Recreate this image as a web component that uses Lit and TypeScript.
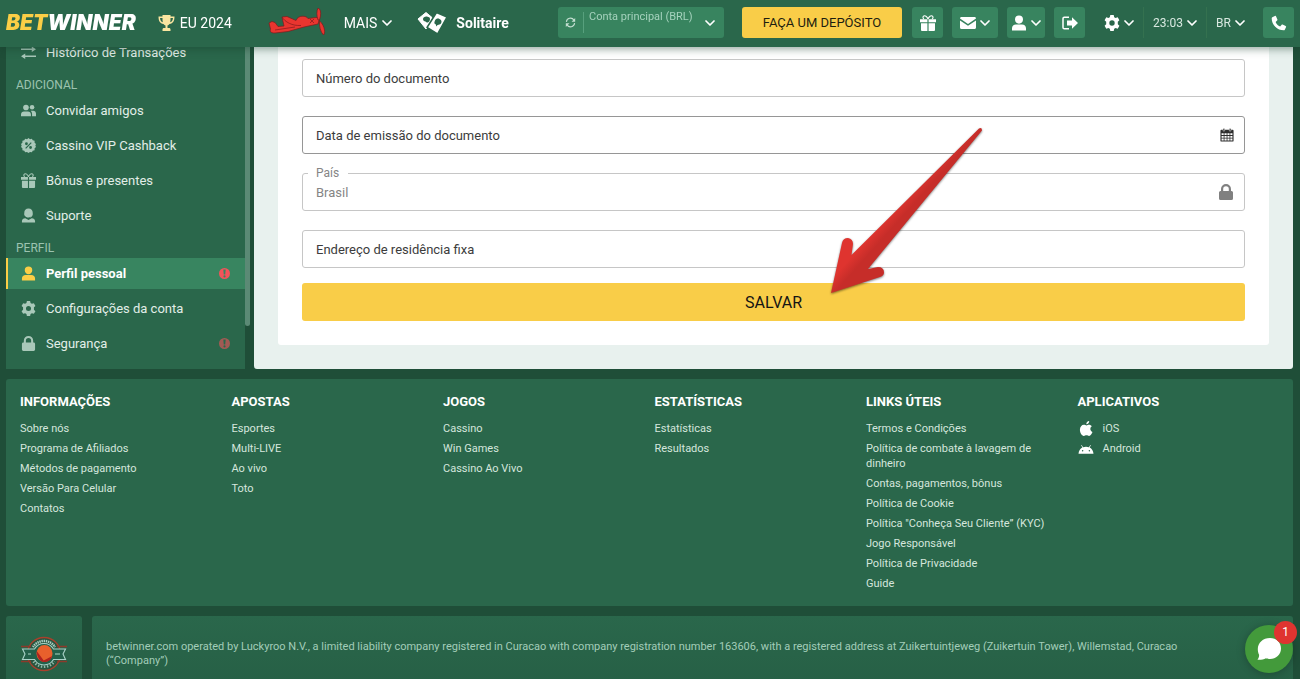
import { LitElement, html, css, svg, nothing, TemplateResult } from "lit";
import { customElement } from "lit/decorators.js";
import { classMap } from "lit/directives/class-map.js";

const chevron = html`<svg class="chev" viewBox="0 0 10 6" aria-hidden="true"><path d="M1 1l4 4 4-4" fill="none" stroke="currentColor" stroke-width="1.7" stroke-linecap="round" stroke-linejoin="round"/></svg>`;

const userShape = svg`<path d="M8 0.5a4 4 0 0 1 4 4c0 2.300-1.700 4.200-4 4.200s-4-1.900-4-4.200a4 4 0 0 1 4-4zM1 15.500v-2.200c0-2.300 1.700-3.800 4-3.800h6c2.300 0 4 1.500 4 3.800v2.200z"/>`;
const giftShape = svg`<path d="M0 4.200h7.400v3H0zM8.600 4.200H16v3H8.600zM1 8.200h6.400V16H2a1 1 0 0 1-1-1zM8.600 8.200H15V15a1 1 0 0 1-1 1H8.600z"/><path d="M8 4C7 1 5 .4 3.800 1S2.800 3.400 4 4M8 4c1-3 3-3.600 4.200-3S13.200 3.400 12 4" fill="none" stroke="currentColor" stroke-width="1.100"/>`;
const gearShape = svg`<path fill-rule="evenodd" d="M6.300 0h3.400l.5 2.200 1.400.8 2.100-.7 1.700 2.900-1.600 1.500v2.600l1.600 1.500-1.700 2.900-2.100-.7-1.400.8-.5 2.200H6.300l-.5-2.200-1.400-.8-2.100.7L.6 10.800l1.600-1.500V6.700L.6 5.200l1.700-2.900 2.100.7 1.400-.8zM8 5.300a2.700 2.700 0 1 0 0 5.400 2.700 2.700 0 0 0 0-5.400z"/>`;
const lockShape = svg`<path fill-rule="evenodd" d="M3 7V5a5 5 0 0 1 10 0v2h.5A1.500 1.500 0 0 1 15 8.500v6a1.500 1.500 0 0 1-1.500 1.500h-11A1.500 1.500 0 0 1 1 14.500v-6A1.500 1.500 0 0 1 2.500 7zm2.200 0h5.600V5a2.800 2.800 0 0 0-5.600 0z"/>`;

const shapes: Record<string, TemplateResult> = {
  user: userShape,
  gift: giftShape,
  gear: gearShape,
  lock: lockShape,
  transfer: svg`<path d="M0 4.500h12M4 12h12" fill="none" stroke="currentColor" stroke-width="1.700"/><path d="M11.500 1.500L16 4.500l-4.500 3zM4.500 9L0 12l4.500 3z"/>`,
  friends: svg`<circle cx="5.300" cy="4.800" r="3"/><path d="M0 14v-1.800c0-2 1.400-3.200 3.200-3.200h4.200c1.800 0 3.200 1.200 3.200 3.200V14z"/><circle cx="11.800" cy="4.600" r="2.400"/><path d="M10.300 8.300h2.600c1.800 0 3.100 1.200 3.100 3V14h-4.200v-2c0-1.600-.5-2.700-1.500-3.700z"/>`,
  percent: svg`<path fill-rule="evenodd" d="M8 0l1.600 1.200 2-.5.9 1.800 2 .5v2L16 6.500 15.300 8l.7 1.600-1.500 1.400v2l-2 .5-.9 1.800-2-.4L8 16l-1.600-1.100-2 .4-.9-1.800-2-.5v-2L0 9.600.7 8 0 6.500 1.500 5V3l2-.5.900-1.800 2 .5zM5.800 4.600a1.500 1.500 0 1 0 0 3 1.500 1.500 0 0 0 0-3zm4.400 4a1.500 1.500 0 1 0 0 3 1.500 1.500 0 0 0 0-3zM10.500 4.500l-6 6.200.9.800 6-6.200z"/>`,
  support: svg`<path d="M8 .5c2.900 0 4.500 2 4.500 4.600 0 1.300.3 2-.3 2.900-.8 1.700-2.300 2.700-4.200 2.700S4.600 9.700 3.800 8c-.6-.9-.3-1.600-.3-2.900C3.500 2.500 5.100.5 8 .5z"/><path d="M1 15.500V14c0-2 1.500-3 3.600-3.200L8 12.700l3.400-1.900C13.500 11 15 12 15 14v1.500z"/><path d="M4 9c1.500 2 4.500 2.200 6 .8" fill="none" stroke="#2a674b" stroke-width=".9"/>`,
  mail: svg`<path d="M0 3.500C0 2.700.6 2 1.500 2h13c.9 0 1.500.7 1.500 1.500L8 9zM0 5.500l8 5.300 8-5.300v7c0 .8-.6 1.500-1.500 1.500h-13A1.500 1.500 0 0 1 0 12.500z"/>`,
  exit: svg`<path d="M7 2.200H2.300c-.8 0-1.300.5-1.300 1.300v9c0 .8.500 1.300 1.300 1.300H7" fill="none" stroke="currentColor" stroke-width="1.500"/><path d="M5 5.500h5V2.300L16 8l-6 5.700v-3.200H5z"/>`,
  phone: svg`<path d="M1.300 2.200L3.900.9c.5-.2 1 0 1.200.5l1.300 3c.2.400.1.800-.3 1.100L4.600 6.900c.9 2 2.400 3.500 4.500 4.500l1.400-1.500c.3-.4.7-.5 1.100-.3l3 1.300c.5.2.7.700.5 1.200l-1.300 2.600c-.2.300-.5.600-1 .6C6.200 15.300.7 9.800.7 3.200c0-.5.200-.8.600-1z"/>`,
  refresh: svg`<path d="M2 7a6 6 0 0 1 11-2.500M14 9a6 6 0 0 1-11 2.500" fill="none" stroke="currentColor" stroke-width="1.600"/><path d="M14.800 1.500V7H9.500zM1.200 14.500V9h5.300z"/>`,
  calendar: svg`<path fill-rule="evenodd" d="M1.500 2h13c.6 0 1 .4 1 1v11.500c0 .6-.4 1-1 1h-13c-.6 0-1-.4-1-1V3c0-.6.4-1 1-1zM1.800 6v2h2.400V6zm3.300 0v2h2.500V6zm3.400 0v2h2.400V6zm3.300 0v2h2.400V6zm-10 3v2h2.400V9zm3.300 0v2h2.500V9zm3.400 0v2h2.400V9zm3.300 0v2h2.400V9zm-10 3v2.300h2.400V12zm3.300 0v2.300h2.500V12zm3.400 0v2.300h2.400V12zm3.300 0v2.300h2.400V12z"/><path d="M3.500.5h1.800v3H3.500zM10.700.5h1.800v3h-1.800z" stroke="#fff" stroke-width=".5"/>`,
  apple: svg`<path d="M11.200 4c1.200 0 2.400.7 3.100 1.700-2.500 1.500-2.100 5 .6 6-.6 1.500-2 4.200-3.600 4.200-1.100 0-1.500-.6-2.800-.6s-1.700.6-2.800.6C3.600 16 1.500 12.600 1.500 9.400 1.500 6.200 3.500 4 5.700 4c1.200 0 2.100.7 2.900.7S10 4 11.200 4zM8.300 3.500C8.200 1.800 9.700.2 11.400 0c.2 1.900-1.300 3.500-3.100 3.500z"/>`,
  android: svg`<path fill-rule="evenodd" d="M0 13.500c.2-2.800 1.800-5.200 4.100-6.500L2.800 4.600l.6-.3L4.800 6.700a8.600 8.600 0 0 1 6.400 0l1.400-2.400.6.300L11.900 7c2.300 1.300 3.900 3.700 4.100 6.500zM4.400 9.600a.8.800 0 1 0 0 1.600.8.800 0 0 0 0-1.600zm7.200 0a.8.800 0 1 0 0 1.600.8.800 0 0 0 0-1.600z"/>`,
  alert: svg`<path fill-rule="evenodd" d="M8 0a8 8 0 1 1 0 16A8 8 0 0 1 8 0zM6.300 2.200l.6 7.400h2.200l.6-7.400zM8 10.600a1.600 1.600 0 1 0 0 3.200 1.600 1.600 0 0 0 0-3.200z"/>`,
  trophy: svg`<path fill-rule="evenodd" d="M4 0h8v1.500h4C16 6 14.500 8.300 11 9c-.6.900-1.300 1.400-2 1.600V13h1.500c1 0 1.500.6 1.500 1.500V16H4v-1.500C4 13.600 4.500 13 5.500 13H7v-2.400C6.300 10.400 5.600 9.900 5 9 1.500 8.300 0 6 0 1.500h4zM1.500 3c.2 2.300 1 3.700 2.800 4.300C4 6 4 4.500 4 3zm13 0H12c0 1.500 0 3-.3 4.300C13.500 6.700 14.300 5.300 14.500 3z"/>`,
};

const icon = (name: string, cls = "ic") =>
  html`<svg class=${cls} viewBox="0 0 16 16" fill="currentColor" aria-hidden="true">${shapes[name]}</svg>`;

@customElement("bw-header")
class BwHeader extends LitElement {
  static styles = css`
    :host { display: block; position: sticky; top: 0; z-index: 5; background: #2a674b; box-shadow: 0 2px 8px rgba(20, 60, 42, 0.45); }
    .bar { display: flex; align-items: center; justify-content: space-between; height: 31px; padding: 7px 6px 9px; }
    .group { display: flex; align-items: center; }
    a, button { color: #fff; text-decoration: none; font: inherit; }
    button { border: 0; background: none; padding: 0; cursor: pointer; display: flex; align-items: center; justify-content: center; gap: 4px; }
    .logo { font: italic 900 21px/31px Inter, sans-serif; margin-right: 22px; }
    .logo span { color: #fbce46; }
    .link { display: flex; align-items: center; gap: 5px; font-size: 14px; }
    .trophy { width: 17px; height: 16px; color: #fae5a0; }
    .plane { width: 60px; height: 30px; margin: 0 17px 0 35px; display: block; }
    .cards { width: 30px; height: 24px; margin: 0 9px 0 25px; }
    .strong { font-weight: 700; gap: 0; }
    .chev { width: 10px; height: 6px; flex: none; }
    .ic { width: 16px; height: 16px; flex: none; }
    .box { height: 31px; background: #38845f; border-radius: 3px; color: #fff; }
    .account { display: grid; grid-template-columns: 26px 140px; margin-right: 18px; }
    .account button { border-right: 1px solid #57a07d; margin: 5px 0; color: #c4dfd2; }
    .account .ic { width: 11px; height: 11px; }
    .pick { display: grid; align-items: center; }
    .pick select, .pick svg { grid-area: 1 / 1; }
    .pick select { appearance: none; border: 0; background: none; color: #d8e8e0; font: inherit; font-size: 12px; padding: 0 14px 0 0; margin: 0; }
    .pick svg { justify-self: end; pointer-events: none; color: #fff; }
    .account select { height: 31px; padding: 0 14px 12px 5px; color: #a5d2bd; font-size: 11px; }
    .account .pick svg { margin-right: 9px; }
    .deposit { width: 160px; background: #f9cd48; color: #1e1e10; font-size: 13px; margin-right: 10px; border-radius: 3px; height: 31px; }
    .w30 { width: 31px; }
    .w38 { width: 38px; }
    .w46 { width: 46px; }
    .tools { display: flex; gap: 9px; margin-right: 19px; }
    .settings { display: flex; gap: 9px; margin-right: 18px; align-items: center; height: 31px; }
    .settings > * + * { border-left: 1px solid #34714f; padding-left: 9px; height: 31px; }
  `;
  render() {
    return html`<header class="bar">
      <nav class="group">
        <a class="logo" href="#"><span>BET</span>WINNER</a>
        <a class="link" href="#">${icon("trophy", "trophy")}EU 2024</a>
        <a href="#" aria-label="Aviator"><svg class="plane" viewBox="0 0 60 30">
          <g fill="#e9352f" stroke="#7d1a1d" stroke-width=".7" stroke-linejoin="round">
          <path d="M2 15l3-1.500 3 1 3 4 6-.5-2-9 5-.5 9 4c1-3 4-4.500 7-4.300 3 .2 4 1 5 2.300l8-1c2 0 3 1 3 3l-1 3.500-14 3-16 4.500-13 1.500c-5 0-5-2-4.500-4z"/>
          <path d="M51 0c2.500 1 3 4 2.500 8l-1 4-1.500 0c-1.500-4-1.500-9 0-12zM52.500 13c3 2 4.500 6 5 9 .3 2 0 4-1 5-3-3-4.500-9-4-14z"/></g>
          <path d="M15 9c3 5 10 9 19 8.500M43 11l4 4M47 11l-4 4M8 22l20-3" stroke="#8d1d1f" stroke-width=".8" fill="none"/></svg></a>
        <button class="link">MAIS ${chevron}</button>
        <a class="link strong" href="#"><svg class="cards" viewBox="0 0 30 24"><path fill="#fff" stroke="#fff" stroke-linejoin="round" d="M1 8L9 1.500l6 5-4.500 10L9 18z"/><path fill="#fff" stroke="#2a674b" stroke-width="1.500" stroke-linejoin="round" d="M19.500 1.500L30 6 20.500 23 10 16.500z"/><path fill="#2a674b" d="M6 8c0-2 3-3 5-2 2 0 2.500 2 1.500 4-1.500 2-3 2-4 .5C7 10.500 6 9.500 6 8zM18 9.500c1-2 3-2.500 4.500-1.500 2.500 1 2.500 3.500 1 5-1.500 1-2.500.7-3.500 1.500l-1 1 0-2c-2-.5-2-2-1-4z"/></svg>Solitaire</a>
      </nav>
      <div class="group">
        <div class="box account">
          <button aria-label="Atualizar saldo">${icon("refresh")}</button>
          <label class="pick"><select aria-label="Conta"><option>Conta principal (BRL)</option></select>${chevron}</label>
        </div>
        <button class="deposit">FAÇA UM DEPÓSITO</button>
        <div class="tools">
          <button class="box w30" aria-label="Bônus">${icon("gift")}</button>
          <button class="box w46" aria-label="Mensagens">${icon("mail")}${chevron}</button>
          <button class="box w38" aria-label="Perfil">${icon("user")}${chevron}</button>
          <button class="box w30" aria-label="Sair">${icon("exit")}</button>
        </div>
        <div class="settings">
          <button aria-label="Configurações">${icon("gear")}${chevron}</button>
          <label class="pick"><select aria-label="Hora"><option>23:03</option></select>${chevron}</label>
          <label class="pick"><select aria-label="Idioma"><option>BR</option></select>${chevron}</label>
        </div>
        <button class="box w30" aria-label="Telefone">${icon("phone")}</button>
      </div>
    </header>`;
  }
}

interface Entry { icon: string; text: string; active?: boolean; alert?: boolean }

const groups: { title?: string; items: Entry[] }[] = [
  { items: [{ icon: "transfer", text: "Histórico de Transações" }] },
  { title: "ADICIONAL", items: [
    { icon: "friends", text: "Convidar amigos" },
    { icon: "percent", text: "Cassino VIP Cashback" },
    { icon: "gift", text: "Bônus e presentes" },
    { icon: "support", text: "Suporte" },
  ] },
  { title: "PERFIL", items: [
    { icon: "user", text: "Perfil pessoal", active: true, alert: true },
    { icon: "gear", text: "Configurações da conta" },
    { icon: "lock", text: "Segurança", alert: true },
  ] },
];

@customElement("bw-sidebar")
class BwSidebar extends LitElement {
  static styles = css`
    :host { display: grid; grid-template-columns: 239px 5px; margin-right: 4px; }
    nav { background: #2a674b; padding-bottom: 10px; }
    h2 { margin: 0; padding: 7px 0 0 10px; font: 400 12px/20px Roboto, sans-serif; color: #9cc3b0; }
    ul { list-style: none; margin: 0; padding: 0; display: grid; gap: 4px; }
    a { display: flex; align-items: center; gap: 10px; height: 31px; padding: 0 15px 0 13px; border-left: 2px solid transparent; color: #e2eee8; text-decoration: none; font-size: 13px; }
    .text { flex: 1; }
    .ic { width: 15px; height: 15px; color: #a9c8b9; }
    .alert { width: 11px; height: 11px; color: #f3535a; opacity: 0.6; }
    .active { background: #388560; border-left-color: #fbce46; color: #fff; font-weight: 700; }
    .active .ic { color: #fbce46; }
    .active .alert { opacity: 1; }
    .thumb { background: #5b8a75; border-radius: 3px; margin-bottom: 43px; }
  `;
  render() {
    return html`<nav>${groups.map((g) => html`
      ${g.title ? html`<h2>${g.title}</h2>` : nothing}
      <ul>${g.items.map((i) => html`<li><a href="#" class=${classMap({ active: !!i.active })}>
        ${icon(i.icon)}<span class="text">${i.text}</span>${i.alert ? icon("alert", "alert") : nothing}</a></li>`)}</ul>`)}
    </nav><div class="thumb"></div>`;
  }
}

@customElement("bw-form")
class BwForm extends LitElement {
  static styles = css`
    :host { display: block; flex: 1; background: #e8f1ee; padding: 0 24px 24px; border-radius: 3px; }
    form { position: relative; background: #fff; padding: 22px 24px 24px; border-radius: 3px; display: grid; gap: 19px; }
    .field { display: grid; position: relative; align-items: center; height: 38px; box-sizing: border-box; border: 1px solid #c6c6c6; border-radius: 3px; font-size: 13px; color: #3c3c3c; }
    .field > * { grid-area: 1 / 1; }
    label { padding-left: 13px; pointer-events: none; }
    input { width: 100%; height: 36px; box-sizing: border-box; padding: 0 13px; border: 0; background: none; font: inherit; color: inherit; }
    .dark { border-color: #969696; }
    .locked { color: #858585; }
    .locked label { position: absolute; top: -9px; left: 5px; padding: 0 9px 0 8px; background: #fff; font-size: 12px; line-height: 16px; }
    .ic { justify-self: end; width: 14px; height: 14px; margin-right: 10px; color: #2e2e2e; }
    .locked .ic { width: 16px; height: 16px; color: #808080; }
    button { height: 38px; margin-top: -4px; border: 0; border-radius: 3px; background: #f9cd48; color: #141414; font: 400 16px Roboto, sans-serif; }
    .arrow { position: absolute; right: 279px; top: 83px; width: 165px; height: 180px; pointer-events: none; filter: drop-shadow(0 1px 1px rgba(0, 0, 0, 0.5)); }
  `;
  render() {
    return html`<form @submit=${(e: Event) => e.preventDefault()}>
      <div class="field"><input id="doc" type="text" /><label for="doc">Número do documento</label></div>
      <div class="field dark"><input id="date" type="text" /><label for="date">Data de emissão do documento</label>${icon("calendar")}</div>
      <div class="field locked"><input id="country" type="text" value="Brasil" disabled /><label for="country">País</label>${icon("lock")}</div>
      <div class="field"><input id="address" type="text" /><label for="address">Endereço de residência fixa</label></div>
      <button type="submit">SALVAR</button>
      <svg class="arrow" viewBox="825 120 165 180" aria-hidden="true">
        <defs><linearGradient id="shade" gradientUnits="userSpaceOnUse" x1="881" y1="204" x2="909" y2="229">
          <stop offset="0.350" stop-color="#df342f"/><stop offset="0.650" stop-color="#c62d29"/></linearGradient></defs>
        <path fill="url(#shade)" d="M979 128.500Q982 127 982 130.500L868 269 878 267Q884 267 884 272.500 884 275.500 880 277L831 293 842 243Q843 238 848 238 853 239 853 244L851.500 255z"/>
      </svg>
    </form>`;
  }
}

const columns: { title: string; links: string[] }[] = [
  { title: "INFORMAÇÕES", links: ["Sobre nós", "Programa de Afiliados", "Métodos de pagamento", "Versão Para Celular", "Contatos"] },
  { title: "APOSTAS", links: ["Esportes", "Multi-LIVE", "Ao vivo", "Toto"] },
  { title: "JOGOS", links: ["Cassino", "Win Games", "Cassino Ao Vivo"] },
  { title: "ESTATÍSTICAS", links: ["Estatísticas", "Resultados"] },
  { title: "LINKS ÚTEIS", links: ["Termos e Condições", "Política de combate à lavagem de dinheiro", "Contas, pagamentos, bônus", "Política de Cookie", "Política \"Conheça Seu Cliente” (KYC)", "Jogo Responsável", "Política de Privacidade", "Guide"] },
  { title: "APLICATIVOS", links: ["iOS", "Android"] },
];
const appIcons: Record<string, string> = { iOS: "apple", Android: "android" };

@customElement("bw-footer")
class BwFooter extends LitElement {
  static styles = css`
    :host { display: block; }
    .columns { display: grid; grid-template-columns: repeat(6, 1fr); background: #2a674b; border-radius: 3px; padding: 14px 4px 15px 14px; margin-bottom: 10px; }
    h3 { margin: 0 0 10px; font: 700 13px/18px Roboto, sans-serif; color: #fff; }
    ul { list-style: none; margin: 0; padding: 0 18px 0 0; display: grid; gap: 5px; font-size: 11px; line-height: 15px; }
    a { color: #d5e6dd; text-decoration: none; display: flex; align-items: center; gap: 9px; }
    .ic { width: 16px; height: 15px; color: #fff; }
    .legal { display: grid; grid-template-columns: 76px 1fr; gap: 10px; }
    .legal > div { background: linear-gradient(#2a674b, #265f45); border-radius: 3px; min-height: 76px; display: flex; align-items: center; }
    .badge { justify-content: center; }
    .badge svg { width: 46px; height: 36px; }
    p { margin: 0; padding: 0 56px 0 14px; font-size: 11px; line-height: 14px; color: #a3cdb9; }
  `;
  render() {
    return html`<footer>
      <div class="columns">${columns.map((c) => html`<section><h3>${c.title}</h3><ul>${c.links.map((l) =>
        html`<li><a href="#">${appIcons[l] ? icon(appIcons[l]) : nothing}<span>${l}</span></a></li>`)}</ul></section>`)}</div>
      <div class="legal">
        <div class="badge"><svg viewBox="0 0 46 36" role="img" aria-label="Curacao Gaming">
          <circle cx="23" cy="18" r="16.500" fill="#27553f" stroke="#a8402c" stroke-width="1.300"/>
          <path d="M12 11a13 13 0 0 1 22 0" fill="none" stroke="#a9cec2" stroke-width="2.400" stroke-dasharray="1.400 .7"/>
          <path d="M12.500 25.500a13 13 0 0 0 21 0" fill="none" stroke="#8fb8a8" stroke-width="2.400" stroke-dasharray="1.400 1.600"/>
          <path d="M0 10.500h10M36 10.500h10M0 25.500h10M36 25.500h10" stroke="#8c3a2b" stroke-width="1.400"/>
          <path d="M1.500 13h12a11 11 0 0 1 19 0h12l-2.500 5 2.500 5.500h-12a11 11 0 0 1-19 0h-12L4 18z" fill="#23604a" stroke="#a9d2c8" stroke-width="1.100"/>
          <path d="M7 18h3M34 18h5" stroke="#7fae9c" stroke-width="1.600"/>
          <ellipse cx="23.500" cy="17.500" rx="8" ry="8.500" fill="#e8602c"/><path d="M15.700 15l7 9.500 8.500-4.500c-1.500 4.500-4.500 6-8 6-4.500-.5-7.500-5-7.500-11z" fill="#b0221f"/></svg></div>
        <div><p>betwinner.com operated by Luckyroo N.V., a limited liability company registered in Curacao with company registration number 163606, with a registered address at Zuikertuintjeweg (Zuikertuin Tower), Willemstad, Curacao (“Company”)</p></div>
      </div>
    </footer>`;
  }
}

@customElement("app-root")
class AppRoot extends LitElement {
  static styles = css`
    :host { display: block; height: 100vh; overflow: hidden; background: #1f4e38; font-family: Roboto, sans-serif; }
    main { padding: 0 7px 0 6px; }
    .workspace { display: flex; margin: -10px 0 10px; }
    .chat { position: fixed; right: 7px; bottom: 6px; z-index: 6; width: 48px; height: 48px; border: 0; border-radius: 50%; padding: 0; background: #439a3b; display: grid; place-items: center; box-shadow: 0 1px 8px rgba(0, 0, 0, 0.25); }
    .chat svg { width: 26px; height: 24px; }
    .count { position: absolute; top: -4px; right: -4px; width: 23px; height: 23px; border-radius: 50%; background: #df3430; color: #fff; font: 400 12px/23px Roboto, sans-serif; text-align: center; }
  `;
  render() {
    return html`<bw-header></bw-header>
      <main>
        <div class="workspace"><bw-sidebar></bw-sidebar><bw-form></bw-form></div>
        <bw-footer></bw-footer>
      </main>
      <button class="chat" aria-label="Chat"><svg viewBox="0 0 26 24"><path fill="#fff" d="M14 1c6.500 0 11 4.500 11 10.500S20 22 14 22c-1.500 0-2.500-.2-4-.8-2.500 1.300-5 1.800-8.500 1.600 1.200-1.800 1.700-3.300 1.600-5C2.200 16 1.800 14 1.800 12 1.800 5.800 7 1 14 1z"/></svg><span class="count">1</span></button>`;
  }
}
